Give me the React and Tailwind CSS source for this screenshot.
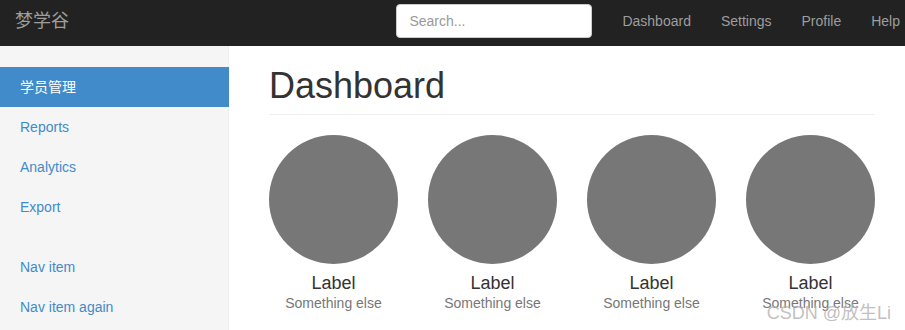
const font = { fontFamily: '"Liberation Sans", Arial, "Noto Sans CJK SC", sans-serif' }

const sideTop = [
  { label: '学员管理', active: true },
  { label: 'Reports' },
  { label: 'Analytics' },
  { label: 'Export' },
]

const sideBottom = ['Nav item', 'Nav item again']

const navLinks = ['Dashboard', 'Settings', 'Profile', 'Help']

const App = () => {
  return (
    <div className="relative h-[330px] w-[905px] overflow-hidden bg-white text-[14px] text-[#333]" style={font}>
      {/* Top navbar */}
      <div className="flex h-[46px] items-center overflow-hidden bg-[#222] pb-[5px]">
        <a className="pl-[15px] text-[18px] leading-[20px] text-[#9d9d9d]">梦学谷</a>
        <div className="ml-auto mr-[-10px] flex items-center">
          <input
            className="h-[34px] w-[196px] rounded-[4px] border border-[#ccc] bg-white px-[12px] text-[14px] text-[#555] placeholder:text-[#999] outline-none"
            placeholder="Search..."
            style={font}
          />
          <ul className="ml-[15px] flex">
            {navLinks.map((l) => (
              <li key={l}>
                <a className="block px-[15px] leading-[20px] text-[#9d9d9d]">{l}</a>
              </li>
            ))}
          </ul>
        </div>
      </div>

      <div className="flex h-[284px]">
        {/* Sidebar */}
        <div className="w-[229px] shrink-0 border-r border-[#eee] bg-[#f5f5f5] pt-[21px]">
          <ul className="mb-[20px] mr-[-1px]">
            {sideTop.map((item) => (
              <li key={item.label}>
                <a
                  className={
                    item.active
                      ? 'block bg-[#428bca] px-[20px] py-[10px] leading-[20px] text-white'
                      : 'block px-[20px] py-[10px] leading-[20px] text-[#428bca]'
                  }
                >
                  {item.label}
                </a>
              </li>
            ))}
          </ul>
          <ul>
            {sideBottom.map((l) => (
              <li key={l}>
                <a className="block px-[20px] py-[10px] leading-[20px] text-[#428bca]">{l}</a>
              </li>
            ))}
          </ul>
        </div>

        {/* Main */}
        <div className="flex-1 pl-[40px] pr-[30px] pt-[20px]">
          <h1 className="mb-[20px] border-b border-[#eee] pb-[8px] text-[36px] leading-[40px] font-normal text-[#333]">
            Dashboard
          </h1>
          <div className="mx-[-15px] grid grid-cols-4">
            {[0, 1, 2, 3].map((i) => (
              <div key={i} className="px-[15px] text-center">
                <div className="aspect-square w-full rounded-full bg-[#777]" />
                <h4 className="mt-[9px] text-[18px] leading-[20px] text-[#333]">Label</h4>
                <span className="block leading-[20px] text-[#777]">Something else</span>
              </div>
            ))}
          </div>
        </div>
      </div>

      {/* watermark */}
      <div className="absolute bottom-[7px] right-[14px] text-[18px] leading-[20px] text-[#b0b0b0]/80">
        CSDN @放生Li
      </div>
    </div>
  )
}

export default App
